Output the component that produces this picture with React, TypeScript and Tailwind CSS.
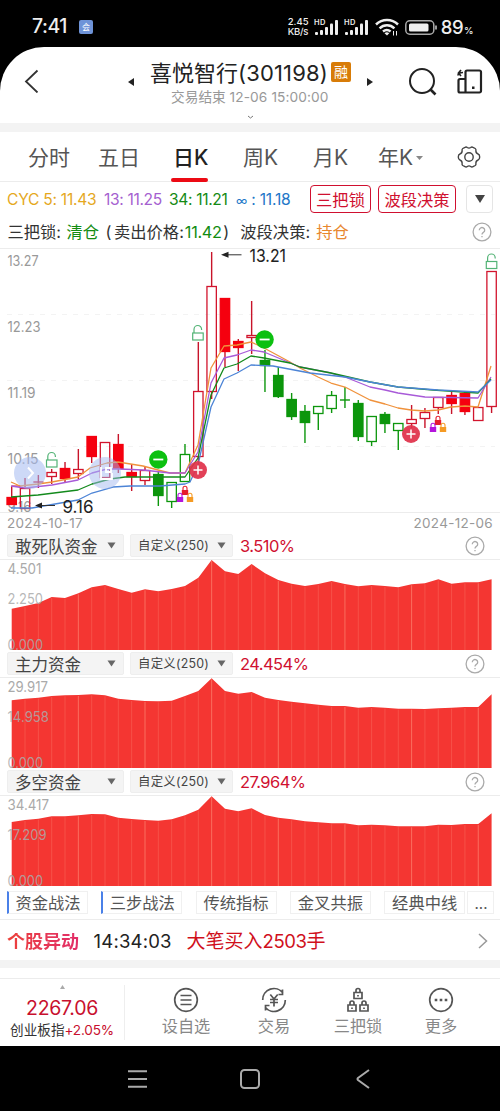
import React from "react";

const F = "font-['Inter','Noto_Sans_CJK_SC',sans-serif]";
const GREEN = "#0c960c";
const STEP = 13.33;
const X0 = 11.7;
const px = (i: number) => X0 + i * STEP;

// kind: R/G = solid red/green body, r/g = hollow body; then high, top, bottom, low
type Candle = [string, number, number, number, number];
const candles: Candle[] = [
  ["R", 486, 497, 505, 505], ["r", 478, 488, 509, 509], ["r", 475, 482, 482, 488], ["r", 469, 472, 477, 484],
  ["R", 462, 468, 479, 482], ["r", 449, 469, 474, 479], ["R", 436, 436, 457, 463], ["r", 442, 442, 478, 480],
  ["R", 434, 444, 469, 473], ["R", 464, 472, 477, 491], ["r", 467, 470, 481, 485], ["G", 472, 474, 496, 506],
  ["g", 482, 482, 502, 508], ["g", 444, 454, 482, 482], ["r", 342, 391, 457, 462], ["r", 252, 286, 392, 399],
  ["R", 298, 298, 352, 367], ["R", 339, 341, 348, 371], ["r", 301, 335, 338, 354], ["G", 350, 360, 366, 392],
  ["G", 367, 375, 397, 398], ["G", 393, 399, 417, 420], ["G", 405, 411, 423, 443], ["g", 406, 406, 414, 430],
  ["g", 391, 395, 409, 413], ["g", 387, 400, 400, 408], ["G", 400, 403, 437, 441], ["g", 416, 416, 442, 446],
  ["G", 412, 414, 424, 433], ["g", 423, 423, 431, 450], ["r", 405, 419, 424, 428], ["r", 408, 412, 419, 428],
  ["r", 397, 397, 408, 414], ["R", 390, 395, 404, 414], ["R", 391, 393, 412, 415], ["r", 407, 407, 421, 421],
  ["r", 271, 271, 407, 413],
];

const lines = [
  { c: "#f0923c", p: "11,482 20,486 38,484 52,482 78,477 90,468 107,463 118,462 143,466 158,470 170,473 185,473 198,445 211,368 224,346 237,345 251,342 264,348 290,362 300,368 318,377 331,383 345,387 370,400 385,404 398,408 411,410 425,411 438,410 451,407 465,406 478,407 491,366" },
  { c: "#a85ad8", p: "11,486 25,488 52,485 78,480 92,473 107,469 120,469 143,470 170,473 185,473 198,452 211,383 224,358 237,355 251,350 264,352 300,367 331,373 345,377 370,387 385,390 398,393 425,397 478,398 491,377" },
  { c: "#138a1c", p: "11,497 38,495 78,490 92,484 110,479 125,477 185,477 198,458 211,395 224,368 237,364 251,356 264,358 290,363 300,367 331,373 370,382 398,387 433,390 478,393 491,379" },
  { c: "#4c84d6", p: "11,508 32,508 78,500 92,493 113,487 130,486 160,486 185,484 190,482 198,465 211,407 224,379 237,373 251,365 273,366 310,373 345,377 370,382 398,387 438,390 478,392 491,380" },
];

function OpenLock({ x, y }: { x: number; y: number }) {
  return (
    <g stroke="#53b376" strokeWidth="1.2" fill="none">
      <rect x={x - 5} y={y} width="10.5" height="7" />
      <path d={`M${x - 3.7} ${y}v-3.5a3.8 4 0 0 1 7.6 0v.5`} />
    </g>
  );
}

function MiniLock({ x, y, c }: { x: number; y: number; c: string }) {
  return (
    <g>
      <path d={`M${x - 2} ${y}v-1.8a2 2 0 0 1 4 0v1.8`} stroke={c} fill="none" strokeWidth="1.1" />
      <rect x={x - 3.2} y={y} width="6.4" height="5" fill={c} />
    </g>
  );
}

function Locks({ x, y }: { x: number; y: number }) {
  return (
    <g>
      <MiniLock x={x} y={y} c="#e51c2c" />
      <MiniLock x={x - 5} y={y + 7} c="#b414dc" />
      <MiniLock x={x + 5} y={y + 7} c="#f59a23" />
    </g>
  );
}

function Label({ x, y, w, s = 14, c = "#999", children }: { x: number; y: number; w: number; s?: number; c?: string; children: string }) {
  return (
    <text x={x} y={y} fontSize={s} fill={c} textLength={w} lengthAdjust="spacingAndGlyphs">{children}</text>
  );
}

function KChart() {
  return (
    <svg className="block h-[264px] w-[500px] overflow-visible" viewBox="0 248 500 264">
      <path d="M0 248.5H500M0 512.5H500" stroke="#ececec" />
      <path d="M7 314.5H495M7 380.5H495M7 446.5H495" stroke="#f3f3f3" strokeDasharray="5 6" />
      <Label x={7.5} y={266} w={31}>13.27</Label>
      <Label x={7.5} y={332} w={33}>12.23</Label>
      <Label x={7.5} y={398} w={28}>11.19</Label>
      <Label x={7.5} y={464} w={31}>10.15</Label>
      <Label x={7.5} y={512} w={24}>9.16</Label>
      {candles.map(([k, h, t, b, l], i) => {
        const x = px(i);
        const up = k.toLowerCase() === "r";
        const solid = k === "R" || k === "G";
        const c = up ? (solid ? "#f5000f" : "#d2142d") : GREEN;
        const wick = up ? "#c8142a" : GREEN;
        return (
          <g key={i}>
            <path d={`M${x} ${h}V${t}M${x} ${b}V${l}`} stroke={wick} strokeWidth="1.4" />
            {t === b ? (
              <path d={`M${x - 5} ${t}H${x + 5}`} stroke={c} strokeWidth="1.4" />
            ) : (
              <rect x={x - 4.7} y={t + 0.5} width="9.4" height={b - t - 1} fill={solid ? c : "none"} stroke={c} strokeWidth="1.3" />
            )}
          </g>
        );
      })}
      <path d="M11.7 486H20" stroke="#d2142d" />
      {lines.map((l) => (
        <polyline key={l.c} points={l.p} fill="none" stroke={l.c} strokeWidth="1.3" strokeLinejoin="round" />
      ))}
      <OpenLock x={51.5} y={460} />
      <OpenLock x={197.7} y={333} />
      <OpenLock x={491.3} y={261.5} />
      <Locks x={185} y={490} />
      <Locks x={438} y={420} />
      {[[198, 470], [411, 434]].map(([x, y]) => (
        <g key={x}>
          <circle cx={x} cy={y} r="9" fill="#e0324a" fillOpacity=".93" />
          <path d={`M${x - 4.5} ${y}h9M${x} ${y - 4.5}v9`} stroke="#fff" strokeWidth="1.5" />
        </g>
      ))}
      {[[158.3, 459.5], [264.6, 339.5]].map(([x, y]) => (
        <g key={x}>
          <circle cx={x} cy={y} r="9.2" fill="#0cc010" />
          <path d={`M${x - 5} ${y}h10`} stroke="#fff" strokeWidth="1.8" />
        </g>
      ))}
      <g>
        <circle cx="30" cy="473" r="16" fill="#a4baf0" fillOpacity=".55" />
        <path d="M28 467.5l5 5.5-5 5.5" stroke="#fff" strokeWidth="2" fill="none" />
        <circle cx="105" cy="473" r="16" fill="#a4baf0" fillOpacity=".5" />
        <path d="M101 467v12h11v-6M106 468h5v4h-5z" stroke="#fff" strokeWidth="1.8" fill="none" />
      </g>
      <path d="M228 254.8H241.5M42 505.5H55" stroke="#333" strokeWidth="1" />
      <path d="M221 254.8l7.5-3v6zM35 505.5l7-3v6z" fill="#222" />
      <Label x={249.5} y={262} w={36.5} s={17.5} c="#222">13.21</Label>
      <Label x={62.5} y={512.5} w={31} s={17.5} c="#222">9.16</Label>
    </svg>
  );
}

interface PanelData {
  name: string; value: string; top: number; labels: [string, number][]; ys: number[];
}

const panels: PanelData[] = [
  { name: "敢死队资金", value: "3.510%", top: 560, labels: [["4.501", 34], ["2.250", 35.5], ["0.000", 35.5]],
    ys: [608.7, 606, 603, 597, 598, 593.3, 587.3, 585, 589, 592.7, 589.3, 591.3, 589, 586, 577.7, 560, 571.3, 574, 564, 573.3, 580, 583.7, 586, 584, 581, 584, 586.3, 585, 586, 587.3, 584.3, 583.3, 579.3, 583.7, 582.3, 582.3, 579.3] },
  { name: "主力资金", value: "24.454%", top: 678, labels: [["29.917", 40.5], ["14.958", 41.5], ["0.000", 35.5]],
    ys: [700.3, 698.7, 697.7, 696, 695.3, 695, 694.3, 695.3, 698.7, 700, 701, 701.3, 700.7, 696, 691, 678.3, 691, 693.7, 692, 697.7, 700, 701.7, 703.3, 704.7, 706, 706, 707.7, 707, 707.7, 708.7, 708.7, 709, 708.3, 707.7, 707, 707, 694.3] },
  { name: "多空资金", value: "27.964%", top: 796, labels: [["34.417", 41.5], ["17.209", 39], ["0.000", 35.5]],
    ys: [822, 820, 818.7, 816.3, 816.3, 815.3, 814, 814.3, 817.7, 819, 820, 820.7, 819.3, 815.3, 809.7, 796.3, 808.7, 811.3, 808.3, 815, 817.7, 819.3, 821.3, 822.3, 823.3, 823.3, 825.3, 824.7, 825.3, 826.3, 826.3, 826.3, 824.7, 825, 824, 824, 813.3] },
];

function Help({ className = "" }: { className?: string }) {
  return (
    <svg className={`h-5 w-5 shrink-0 ${className}`} viewBox="0 0 20 20" fill="none" stroke="#aaa" strokeWidth="1.3">
      <circle cx="10" cy="10" r="8.9" />
      <path d="M7.3 8.2a2.7 2.6 0 1 1 4.2 2.1c-1 .7-1.5 1-1.5 2.3M10 13.9v1.4" />
    </svg>
  );
}

function Tri() {
  return <svg className="h-[7px] w-[9px]" viewBox="0 0 8 7"><path d="M0 .5h8L4 6.500z" fill="#666" /></svg>;
}

function Panel({ d }: { d: PanelData }) {
  const pts = d.ys.map((y, i) => `${px(i).toFixed(1)},${(y - d.top).toFixed(1)}`).join(" ");
  return (
    <section className="h-[118px]">
      <div className="flex h-7 items-center border-b border-[#ececec] pl-[7px] pr-[15px]">
        <div className="flex h-[23px] w-[117px] items-center justify-between rounded-[2px] border border-[#eee] bg-[#f4f4f4] px-[7px] text-[16.5px] leading-none text-[#444]">
          <span className="pt-[3px]">{d.name}</span><Tri />
        </div>
        <div className="ml-[6px] flex h-[23px] w-[103px] items-center justify-between rounded-[2px] border border-[#eee] bg-[#f4f4f4] pl-[7px] pr-[6px] text-[12.4px] leading-none text-[#444]">
          <span className="pt-px tracking-[0.25px]">自定义(250)</span><Tri />
        </div>
        <span className="ml-[7px] pt-[2px] text-[16.5px] leading-none tracking-[-0.55px] text-[#d01030]">{d.value}</span>
        <Help className="ml-auto" />
      </div>
      <svg className="block h-[90px] w-[500px] overflow-visible" viewBox="0 0 500 90">
        <polygon points={`${X0},90 ${pts} ${px(36)},90`} fill="#f43632" />
        {d.ys.map((y, i) => i > 0 && i < 36 && (
          <path key={i} d={`M${px(i)} ${y - d.top + 1}V90`} stroke="#ff9a82" strokeWidth=".8" strokeOpacity={i % 5 === 0 ? 0.7 : 0.35} />
        ))}
        {d.labels.map(([t, w], i) => (
          <text key={i} x="7.5" y={[13.8, 43.5, 90][i]} fontSize="14" fill="#aaa" fillOpacity={i === 0 ? 1 : 0.85} textLength={w} lengthAdjust="spacingAndGlyphs">{t}</text>
        ))}
      </svg>
    </section>
  );
}

function Signal() {
  return (
    <svg className="h-[17px] w-[25px] overflow-visible" viewBox="0 0 25 17" fill="#eee">
      <text x="0" y="6" fontSize="7.5" fontWeight="600" textLength="11.5">HD</text>
      <rect x="1" y="13" width="3" height="3" rx="1" /><rect x="6" y="11" width="3" height="5" rx="1" />
      <rect x="11" y="8" width="3" height="8" rx="1" /><rect x="16" y="4.5" width="3" height="11.5" rx="1" />
      <rect x="21" y="1" width="3" height="15" rx="1" />
    </svg>
  );
}

function StatusBar() {
  return (
    <div className="flex h-[47px] items-center pl-8 pr-[27px] pt-[7px] text-[#eee]">
      <span className="w-[47px] text-[19.5px] font-medium leading-none tracking-[-0.5px]">7:41</span>
      <span className="flex h-[14px] w-[14px] items-center justify-center rounded-[2px] bg-[#6e93d8] text-[8px] leading-none text-white">会</span>
      <div className="ml-auto flex items-center">
        <div className="mr-[4px] w-[22px] text-[9.5px] font-medium leading-[10.5px]"><div>2.45</div><div className="tracking-[-0.3px]">KB/s</div></div>
        <Signal /><span className="w-[5px]" /><Signal />
        <svg className="ml-[6px] h-[18px] w-6" viewBox="0 0 24 18" fill="none" stroke="#eee" strokeWidth="2.5">
          <path d="M1 6.5a16 16 0 0 1 22 0M4.6 10.3a10.5 10.5 0 0 1 14.8 0M8 13.5a6 6 0 0 1 7.600 0" />
          <path d="M9.5 15.200a3.600 3.600 0 0 1 4.800 0L12 17.500z" fill="#eee" stroke="none" />
          <path d="M18.500 13v4.500M21.500 13v4.500" strokeWidth="1" />
        </svg>
        <svg className="ml-[6px] h-[15px] w-8" viewBox="0 0 32 15" fill="none">
          <rect x=".8" y=".8" width="28" height="13.4" rx="4" stroke="#aaa" strokeWidth="1.5" />
          <rect x="4" y="3.5" width="19.5" height="8" rx="1.5" fill="#eee" /><path d="M31 5.5v4" stroke="#ccc" strokeWidth="1.5" />
        </svg>
        <span className="ml-[4px] text-[18.5px] font-medium leading-none tracking-[-0.5px]">89<span className="ml-[1px] text-[9.5px]">%</span></span>
      </div>
    </div>
  );
}

function Header() {
  return (
    <header className="flex h-[76px] pl-[24px]">
      <svg className="mt-[22px] h-6 w-[15px] shrink-0" viewBox="0 0 15 24" fill="none" stroke="#333" strokeWidth="1.8"><path d="M13.5 1.500L2 12.500 13.500 23.500" /></svg>
      <svg className="ml-[89px] mt-[31px] h-2 w-[6px] shrink-0" viewBox="0 0 6 8"><path d="M6 0v8L0 4z" fill="#222" /></svg>
      <div className="ml-[16px] flex w-[202px] shrink-0 flex-col items-start">
        <div className="mt-[13px] flex h-[26px] items-center whitespace-nowrap text-[22px] leading-none text-[#222]">
          <span>喜悦智行</span><span className="w-[93px] tracking-[0.15px]">(301198)</span>
          <span className="mb-[3px] flex h-5 w-5 items-center justify-center rounded-[2px] bg-[#d87c08] text-[14px] text-white">融</span>
        </div>
        <div className="ml-[21px] mt-[4px] whitespace-nowrap text-[13.7px] leading-[14px] text-[#999]">交易结束 <span className="tracking-[0.1px]">12-06 15:00:00</span></div>
        <svg className="ml-[97px] mt-[11px] h-[5px] w-[7px]" viewBox="0 0 7 5" fill="none" stroke="#777"><path d="M1 1l2.500 2L6 1" /></svg>
      </div>
      <svg className="ml-[15px] mt-[31px] h-2 w-[6px] shrink-0" viewBox="0 0 6 8"><path d="M0 0v8L6 4z" fill="#222" /></svg>
      <svg className="ml-[35px] mt-[20px] h-[30px] w-[30px] shrink-0" viewBox="0 0 30 30" fill="none" stroke="#222" strokeWidth="2"><circle cx="14" cy="14" r="12" /><path d="M22.500 22.500l5 5" strokeWidth="2.600" /></svg>
      <svg className="ml-[18px] mt-[21px] h-[28px] w-[27px] shrink-0" viewBox="0 0 27 28" fill="none" stroke="#222" strokeWidth="2.2">
        <path d="M9.5 24.5V4a1.5 1.5 0 0 1 1.5-1.5h12.500a1.500 1.500 0 0 1 1.500 1.500v19a1.500 1.500 0 0 1-1.500 1.500H4a1.500 1.500 0 0 1-1.500-1.500V12.500A1.500 1.500 0 0 1 4 11h5" />
        <path d="M2 7.500C2 5 4 4.500 7 4.500M5 2L2.500 5 5 8" strokeWidth="1.700" />
        <rect x="16" y="18.500" width="2.500" height="2.500" fill="#222" stroke="none" />
      </svg>
    </header>
  );
}

function Tabs() {
  return (
    <nav className="flex h-[50px] items-center border-b border-[#ececec] pl-[28px] pt-[2px] text-[21px] leading-none text-[#555]">
      <span className="w-[70px]">分时</span>
      <span className="w-[75px]">五日</span>
      <span className="relative w-[70px] font-medium text-[#222]">日K<i className="absolute -left-[2px] top-[31px] h-1 w-[37px] rounded-full bg-[#ec0a14]" /></span>
      <span className="w-[70px]">周K</span>
      <span className="w-[65px]">月K</span>
      <span className="flex w-[79px] items-center">年K<svg className="ml-[3px] h-1 w-[7px]" viewBox="0 0 7 4"><path d="M0 0h7L3.500 4z" fill="#888" /></svg></span>
      <svg className="mb-[2px] h-6 w-6" viewBox="0 0 24 24" fill="none" stroke="#444" strokeWidth="1.4" strokeLinejoin="round">
        <path d="M8 2.300q1.200-.8 2.300.2 1.700 1.300 3.400 0 1.100-1 2.300-.2l2.200 1.200q1 .7.700 2.200-.2 2.300 2.200 3.300 1.600.5 1.600 3t-1.600 3q-2.400 1-2.200 3.300.3 1.500-.7 2.200L16 21.700q-1.200.8-2.300-.2-1.700-1.300-3.400 0-1.100 1-2.300.2l-2.200-1.200q-1-.7-.7-2.200.2-2.300-2.200-3.300-1.600-.5-1.600-3t1.600-3q2.400-1 2.200-3.300-.3-1.500.7-2.200z" />
        <circle cx="12" cy="12" r="4.200" />
      </svg>
    </nav>
  );
}

function Indicators() {
  return (
    <>
      <div className="flex h-[34px] items-center whitespace-nowrap pl-[7px] text-[15.6px] leading-none">
        <span className="w-[97px] pt-px tracking-[-0.25px] text-[#e5a81e]">CYC 5: 11.43</span>
        <span className="w-[65px] pt-px tracking-[-0.35px] text-[#a55fd0]">13: 11.25</span>
        <span className="w-[67px] pt-px tracking-[-0.35px] text-[#148a14]">34: 11.21</span>
        <span className="w-[74px] pt-px tracking-[-0.2px] text-[#2277c8]"><span className="text-[12px]">∞</span> : 11.18</span>
        <span className="flex h-7 w-[61px] items-center justify-center rounded-[4px] border-[1.500px] border-[#d01030] pt-[2px] text-[16.3px] text-[#d01030]">三把锁</span>
        <span className="ml-[7px] flex h-7 w-[78px] items-center justify-center rounded-[4px] border-[1.500px] border-[#d01030] pt-[2px] text-[16.3px] text-[#d01030]">波段决策</span>
        <span className="ml-[10px] flex h-7 w-[27px] items-center justify-center rounded-[4px] border border-[#e5e5e5]"><svg className="h-2 w-[10px]" viewBox="0 0 10 8"><path d="M0 0h10L5 8z" fill="#444" /></svg></span>
      </div>
      <div className="flex h-8 items-center whitespace-nowrap pl-[7.500px] pr-[8px] text-[16.3px] leading-none text-[#333]">
        <span className="w-[59px]">三把锁:</span><span className="w-[39px] text-[#128c12]">清仓</span>
        <span className="w-[8.500px]">(</span><span>卖出价格:</span><span className="ml-[1px] w-[38.500px] tracking-[-0.3px] text-[#128c12]">11.42</span><span>)</span>
        <span className="ml-[11px] w-[76px]">波段决策:</span><span className="text-[#e8872e]">持仓</span>
        <Help className="ml-auto" />
      </div>
    </>
  );
}

function Chips() {
  return (
    <div className="flex h-[34px] items-center border-b border-[#ececec] pl-[7px] text-[16.300px] leading-none text-[#555]">
      {["资金战法", "三步战法", "传统指标", "金叉共振", "经典中线"].map((t, i) => (
        <span key={t} className={`mr-[13.300px] flex h-[23px] w-[81px] shrink-0 items-center justify-center border border-[#f0f0f0] pt-[2px] ${i < 2 ? "border-l-[2.500px] border-l-[#4a80e8]" : ""}`}>{t}</span>
      ))}
      <span className="-ml-[11px] flex h-[23px] w-[27px] shrink-0 items-center justify-center border border-[#f0f0f0] pt-[2px] text-[15px]">...</span>
    </div>
  );
}

function Lock({ x, y }: { x: number; y: number }) {
  return <path d={`M${x} ${y}h8v6h-8zM${x + 2} ${y}v-2a2 2 0 0 1 4 0v2M${x + 4} ${y + 2.5}v1.5`} />;
}

function Footer() {
  const icons = [
    <g key="a"><circle cx="13" cy="13" r="11.3" /><path d="M7.500 8.500h11M7.500 13h11M7.500 17.500h11" /></g>,
    <g key="b"><path d="M1.700 13A11.300 11.300 0 0 1 22 6M21.500 2.500V7.500H17.500M24.300 13A11.300 11.300 0 0 1 4 20M4.500 23.500V18.500H8.500M9.300 7.500l3.700 4.500 3.700-4.500M13 12v7.500M9 12.500h8M9 15.500h8" /></g>,
    <g key="c"><Lock x={9} y={5.5} /><Lock x={3} y={18} /><Lock x={15} y={18} /></g>,
    <g key="d"><circle cx="13" cy="13" r="11.3" /><path d="M6.700 13h2.600M11.700 13h2.600M16.700 13h2.600" strokeWidth="2.5" /></g>,
  ];
  return (
    <footer className="flex h-[68px] border-t border-[#ececec]">
      <div className="my-[6px] flex w-[125px] flex-col items-center border-r border-[#eee] leading-none">
        <svg className="h-[4px] w-[5px]" viewBox="0 0 5 4"><path d="M0 4h5L2.500 0z" fill="#aaa" /></svg>
        <span className="mt-[10px] text-[19.500px] tracking-[-0.3px] text-[#c8102e]">2267.06</span>
        <span className="mt-[5px] whitespace-nowrap text-[13.600px] text-[#333]">创业板指<span className="tracking-[-0.2px] text-[#c8102e]">+2.05%</span></span>
      </div>
      {["设自选", "交易", "三把锁", "更多"].map((t, i) => (
        <div key={t} className={`flex w-20 flex-col items-center pt-[8px] text-[16.200px] leading-none text-[#888] ${["ml-[21px]", "ml-[8px]", "ml-[4px]", "ml-[3px]"][i]}`}>
          <svg className="h-[26px] w-[26px]" viewBox="0 0 26 26" fill="none" stroke="#555" strokeWidth="1.700">{icons[i]}</svg>
          <span className="mt-[5px]">{t}</span>
        </div>
      ))}
    </footer>
  );
}

export default function App() {
  return (
    <div className={`h-[1111px] w-[500px] overflow-hidden bg-black ${F}`}>
      <StatusBar />
      <main className="h-[999px] overflow-hidden rounded-t-[44px] bg-white">
        <Header />
        <div className="h-[9px] bg-[#f3f3f3]" />
        <Tabs />
        <Indicators />
        <KChart />
        <div className="flex h-5 items-center justify-between pl-[7px] pr-[7px] pt-[3px] text-[13.500px] leading-none tracking-[0.300px] text-[#999]"><span>2024-10-17</span><span>2024-12-06</span></div>
        {panels.map((d) => <Panel key={d.name} d={d} />)}
        <Chips />
        <div className="flex h-10 items-center whitespace-nowrap pl-[7px] pr-[12px] pt-[3px] text-[19px] leading-none text-[#222]">
          <b className="w-[86.500px] bg-gradient-to-r from-[#ec4038] to-[#e02870] bg-clip-text text-[18px] text-transparent">个股异动</b>
          <span className="w-[93px] text-[18.500px] tracking-[0.200px]">14:34:03</span>
          <span className="text-[#d0101c]">大笔买入<span className="text-[18.500px] tracking-[-0.400px]">2503</span>手</span>
          <svg className="mb-[2px] ml-auto h-4 w-[10px]" viewBox="0 0 10 16" fill="none" stroke="#999" strokeWidth="1.500"><path d="M1 1l7.500 7L1 15" /></svg>
        </div>
        <div className="h-2 bg-[#f3f3f3]" />
        <div className="h-[10px]" />
        <Footer />
      </main>
      <div className="flex h-[65px] items-center pl-[127px]">
        <svg className="h-5 w-[21px]" viewBox="0 0 21 20" stroke="#aaa" strokeWidth="2"><path d="M1 2.300h19M1 10h19M1 17.700h19" /></svg>
        <svg className="ml-[92px] h-5 w-5" viewBox="0 0 20 20" fill="none" stroke="#aaa" strokeWidth="2"><rect x="1" y="1" width="18" height="18" rx="3.5" /></svg>
        <svg className="ml-[96px] h-5 w-[14px]" viewBox="0 0 14 20" fill="none" stroke="#aaa" strokeWidth="2"><path d="M13 1L2 9q-1 1 0 2l11 8" /></svg>
      </div>
    </div>
  );
}
